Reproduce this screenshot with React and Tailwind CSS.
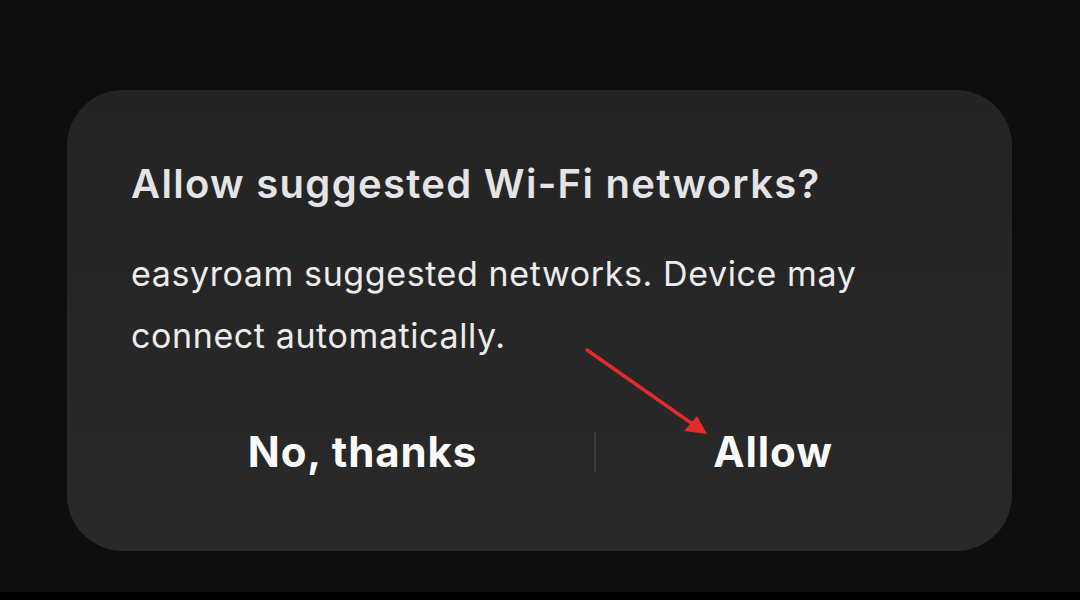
import React from "react";

export default function App() {
  return (
    <div
      className="relative flex h-[600px] w-[1080px] flex-col bg-[#0e0e0e]"
      style={{ fontFamily: "Inter, 'Noto Sans', sans-serif" }}
    >
      <div className="flex flex-1 flex-col px-[67px] pt-[90px]">
        {/* Dialog card */}
        <div className="flex h-[461px] w-[945px] flex-col rounded-[56px] bg-gradient-to-b from-[#242424] to-[#292929] pl-[64px] pr-[62px] pt-[70px]">
          <h1 className="text-[40px] font-semibold leading-[48px] tracking-[1.3px] text-[#e4e4e6]">
            Allow suggested Wi-Fi networks?
          </h1>
          <p className="mt-[35px] text-[34px] leading-[62px] tracking-[0.6px] text-[#ececec]">
            easyroam suggested networks. Device may
            <br />
            connect automatically.
          </p>
          <div className="mt-[62px] flex h-[46px] items-center">
            <button className="w-[463px] text-center text-[42px] font-bold leading-[46px] tracking-[0.9px] text-[#fafafa]">
              No, thanks
            </button>
            <div className="h-[40px] w-[2px] bg-[#3a3a3a]" />
            <button className="flex-1 text-center text-[42px] font-bold leading-[46px] tracking-[0.9px] text-[#fafafa]">
              Allow
            </button>
          </div>
        </div>
      </div>
      <div className="h-[8px] bg-black" />

      {/* Annotation arrow */}
      <svg className="absolute left-0 top-0" width="1080" height="600">
        <line x1="587" y1="350" x2="694" y2="425" stroke="#e32b2b" strokeWidth="3.5" strokeLinecap="round" />
        <polygon points="707,434 684,431 697,416" fill="#e32b2b" />
      </svg>
    </div>
  );
}
